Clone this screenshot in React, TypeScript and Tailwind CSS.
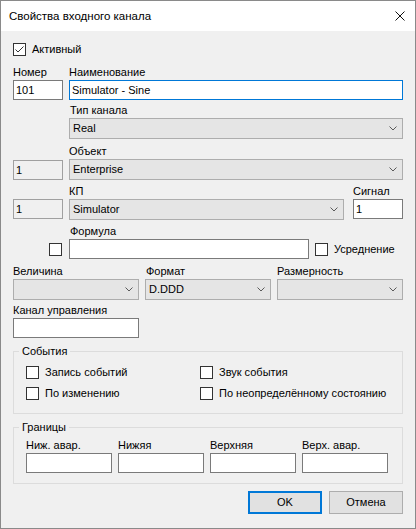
import type { ReactNode } from 'react';

const Chevron = () => (
    <svg width="8" height="5" viewBox="0 0 8 5" className="shrink-0">
        <polyline points="0.5,0.5 4,4 7.5,0.5" fill="none" stroke="#5a5a5a" strokeWidth="1" />
    </svg>
);

const Combo = ({ value = '', className = '' }: { value?: string; className?: string }) => (
    <div className={`h-[21px] border border-[#adadad] bg-[#e5e5e5] flex items-center justify-between pl-[3px] pr-[5px] ${className}`}>
        <span>{value}</span>
        <Chevron />
    </div>
);

const boxStyles = {
    normal: 'border-[#7a7a7a] bg-white',
    focus: 'border-[#0078d7] bg-white',
    readonly: 'border-[#a0a0a0] bg-[#f0f0f0]',
};

const TextBox = ({ value = '', className = '', kind = 'normal' }: { value?: string; className?: string; kind?: keyof typeof boxStyles }) => (
    <input
        readOnly
        defaultValue={value}
        className={`h-[20px] border px-[2px] outline-none ${boxStyles[kind]} ${className}`}
    />
);

const Check = ({ checked = false, children }: { checked?: boolean; children?: ReactNode }) => (
    <div className="h-[15px] flex items-center gap-[6px] whitespace-nowrap">
        <div className="w-[13px] h-[13px] border border-[#333] bg-white shrink-0">
            {checked && (
                <svg width="11" height="11" viewBox="0 0 11 11">
                    <polyline points="1.5,5.5 4,8 9.5,2.5" fill="none" stroke="#333" strokeWidth="1" />
                </svg>
            )}
        </div>
        {children}
    </div>
);

const Label = ({ children, className = '' }: { children?: ReactNode; className?: string }) => (
    <div className={`h-[16px] leading-[16px] whitespace-nowrap ${className}`}>{children}</div>
);

export default function App() {
    return (
        <div className="w-[416px] h-[529px] border border-[#8a8a8a] flex flex-col font-['Liberation_Sans',Arial,sans-serif] text-[11px] leading-[15px] text-black">
            {/* title bar */}
            <div className="h-[30px] bg-white flex items-center justify-between pl-[8px] pr-[10px]">
                <span className="text-[11.5px]">Свойства входного канала</span>
                <svg width="10" height="10" viewBox="0 0 10 10">
                    <line x1="0.5" y1="0.5" x2="9.5" y2="9.5" stroke="#111" strokeWidth="1" />
                    <line x1="9.5" y1="0.5" x2="0.5" y2="9.5" stroke="#111" strokeWidth="1" />
                </svg>
            </div>

            <div className="flex-1 bg-[#f0f0f0] px-[12px] pt-[11px] flex flex-col">
                <Check checked>Активный</Check>

                <div className="mt-[7px] flex gap-[6px]">
                    <Label className="w-[50px]">Номер</Label>
                    <Label>Наименование</Label>
                </div>
                <div className="flex gap-[6px]">
                    <TextBox value="101" className="w-[50px]" />
                    <TextBox value="Simulator - Sine" kind="focus" className="flex-1" />
                </div>

                <Label className="mt-[2px] pl-[57px]">Тип канала</Label>
                <Combo value="Real" className="ml-[56px]" />

                <Label className="mt-[4px] pl-[56px]">Объект</Label>
                <div className="flex gap-[6px] items-start">
                    <TextBox value="1" kind="readonly" className="w-[50px] mt-[1px]" />
                    <Combo value="Enterprise" className="flex-1" />
                </div>

                <div className="mt-[3px] flex">
                    <Label className="w-[56px]" />
                    <Label className="flex-1">КП</Label>
                    <Label className="w-[50px]">Сигнал</Label>
                </div>
                <div className="flex items-start">
                    <TextBox value="1" kind="readonly" className="w-[50px]" />
                    <Combo value="Simulator" className="flex-1 ml-[6px] mr-[9px]" />
                    <TextBox value="1" className="w-[50px]" />
                </div>

                <Label className="mt-[3px] pl-[57px]">Формула</Label>
                <div className="flex items-center gap-[6px]">
                    <div className="w-[50px] flex justify-end pr-[1px]">
                        <Check />
                    </div>
                    <TextBox className="w-[240px]" />
                    <Check>Усреднение</Check>
                </div>

                <div className="mt-[4px] grid grid-cols-3 gap-x-[6px]">
                    <Label>Величина</Label>
                    <Label className="pl-[1px]">Формат</Label>
                    <Label>Размерность</Label>
                    <Combo />
                    <Combo value="D.DDD" />
                    <Combo />
                </div>

                <Label className="mt-[2px]">Канал управления</Label>
                <TextBox className="w-[126px]" />

                <fieldset className="mt-[5px] border border-[#dcdcdc] pb-[12px]">
                    <legend className="ml-[5px] px-[3px] leading-[16px]">События</legend>
                    <div className="pl-[12px] pt-[6px] grid grid-cols-[174px_1fr] gap-y-[6px]">
                        <Check>Запись событий</Check>
                        <Check>Звук события</Check>
                        <Check>По изменению</Check>
                        <Check>По неопределённому состоянию</Check>
                    </div>
                </fieldset>

                <fieldset className="mt-[5px] border border-[#dcdcdc] pb-[10px]">
                    <legend className="ml-[5px] px-[3px] leading-[16px]">Границы</legend>
                    <div className="pl-[12px] pt-[2px] flex gap-[6px]">
                        {['Ниж. авар.', 'Нижяя', 'Верхняя', 'Верх. авар.'].map((t) => (
                            <div key={t} className="flex flex-col w-[86px]">
                                <Label>{t}</Label>
                                <TextBox className="w-full" />
                            </div>
                        ))}
                    </div>
                </fieldset>

                <div className="mt-[7px] flex justify-end gap-[7px]">
                    <button className="w-[74px] h-[23px] border-2 border-[#0078d7] bg-[#e1e1e1]">OK</button>
                    <button className="w-[74px] h-[23px] border border-[#adadad] bg-[#e1e1e1]">Отмена</button>
                </div>
            </div>
        </div>
    );
}
